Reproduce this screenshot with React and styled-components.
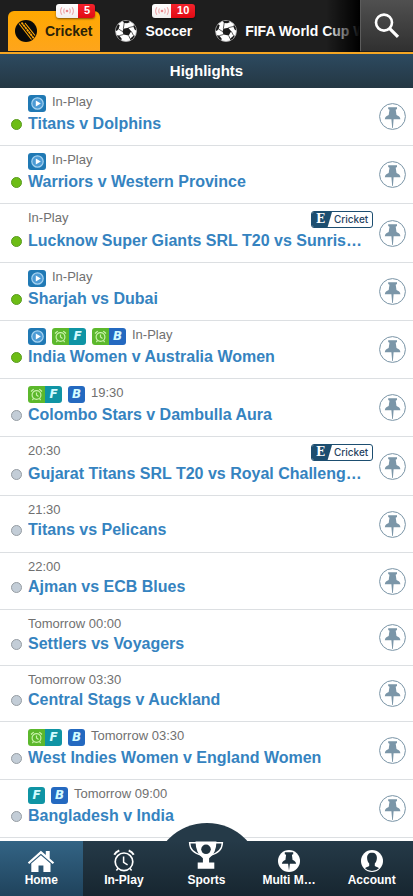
import React from "react";
import styled, { createGlobalStyle, css } from "styled-components";

const GlobalStyle = createGlobalStyle`
  *, *::before, *::after { box-sizing: border-box; }
  body {
    margin: 0;
    background: #fff;
    font-family: "Liberation Sans", Arial, sans-serif;
  }
  button { font: inherit; border: 0; padding: 0; background: none; cursor: pointer; }
  a { text-decoration: none; }
  svg { display: block; }
`;

const Page = styled.div`
  display: flex;
  flex-direction: column;
  min-height: 100vh;
`;

/* ---------- top bar ---------- */

const TopBar = styled.header`
  display: flex;
  height: 54px;
  background: #1e1e1e;
  border-bottom: 2px solid #f5a623;
`;

const SportTabs = styled.nav`
  position: relative;
  flex: 1;
  min-width: 0;
  display: flex;
  align-items: flex-end;
  gap: 8px;
  padding: 0 0 1px 8px;
  overflow: hidden;

  &::after {
    content: "";
    position: absolute;
    inset: 0 0 0 auto;
    width: 34px;
    background: linear-gradient(to right, rgba(0, 0, 0, 0), #000);
  }
`;

const SportTab = styled.a`
  position: relative;
  flex: none;
  display: flex;
  align-items: center;
  gap: 8px;
  height: 40px;
  padding: 0 8px 0 7px;
  border-radius: 6px 6px 0 0;
  color: #fff;
  font-size: 14px;
  font-weight: 700;
  line-height: 18px;
  white-space: nowrap;
  ${(p) =>
    p.$active &&
    css`
      color: #2a2208;
      background: linear-gradient(#ffa800, #fea51c);
    `}
`;

const LiveBadge = styled.span`
  position: absolute;
  top: -7px;
  right: 5px;
  display: flex;
  height: 14px;
  border-radius: 3px;
  overflow: hidden;
  font-size: 11px;
  line-height: 13px;
  color: #fff;
  box-shadow: 0 1px 2px rgba(0, 0, 0, 0.5);
`;

const LiveSignal = styled.span`
  display: grid;
  place-items: center;
  width: ${(p) => (p.$narrow ? 19 : 22)}px;
  background: linear-gradient(#fff, #f1eeee);
`;

const LiveCount = styled.span`
  width: ${(p) => (p.$wide ? 24 : 17)}px;
  text-align: center;
  background: linear-gradient(#f3232c, #e20a14);
`;

const SearchButton = styled.button`
  flex: none;
  width: 53px;
  height: 51px;
  display: grid;
  place-items: center;
  border-left: 1px solid #5c5c5c;
  background: linear-gradient(#505050, #303030);
`;

const SectionTitle = styled.h1`
  margin: 0;
  height: 34px;
  color: #fff;
  background: linear-gradient(#2d4a60, #243743);
  font-size: 15px;
  font-weight: 700;
  line-height: 34px;
  text-align: center;
`;

/* ---------- event list ---------- */

const EventList = styled.ul`
  margin: 0;
  padding: 0;
  list-style: none;
`;

const EventRow = styled.li`
  display: flex;
  align-items: center;
  gap: 6px;
  padding: 0 7px 0 11px;
  border-bottom: 1px solid #dcdfe2;
`;

const EventMain = styled.div`
  flex: 1;
  min-width: 0;
  display: grid;
  grid-template-columns: 11px minmax(0, 1fr);
  column-gap: 6px;
  align-items: center;
  padding: 7px 0 ${(p) => (p.$kind === "plain" ? 12 : 11)}px;
`;

const metaHeights = { plain: 17, day: 17, icons: 19, esport: 20 };

const EventMeta = styled.div`
  grid-column: 2;
  display: flex;
  align-items: flex-start;
  gap: 6px;
  height: ${(p) => metaHeights[p.$kind]}px;
`;

const EventTime = styled.span`
  color: #707070;
  font-size: 13px;
  line-height: 14px;
`;

const StatusDot = styled.span`
  width: 11px;
  height: 11px;
  border-radius: 50%;
  background: ${(p) => (p.$live ? "#6dbd15" : "#c3cdd7")};
  border: 1px solid ${(p) => (p.$live ? "#5a9a20" : "#969da3")};
`;

const EventLink = styled.a`
  color: #3583c0;
  font-size: 16px;
  font-weight: 700;
  line-height: 20px;
  white-space: nowrap;
  overflow: hidden;
  text-overflow: ellipsis;
`;

const MarketBadge = styled.span`
  display: flex;
  height: 17px;
  border-radius: 3px;
  overflow: hidden;
`;

const partColours = { play: "#2079b4", clock: "#5cb82c", F: "#0f94a4", B: "#2469c0" };

const BadgePart = styled.span`
  display: grid;
  place-items: center;
  width: ${(p) => (p.$type === "play" ? 18 : 17)}px;
  height: 17px;
  background: ${(p) => partColours[p.$type]};
`;

const EsportBadge = styled.span`
  flex: none;
  display: flex;
  align-items: center;
  width: 62px;
  height: 17px;
  margin-left: auto;
  border: 1px solid #1d4e70;
  border-radius: 3px;
  overflow: hidden;
  color: #27435f;
  background: #fff;
  font-family: Inter, sans-serif;
  font-size: 10px;
  font-weight: 500;
  line-height: 15px;
`;

const EsportMark = styled.span`
  width: 20px;
  height: 15px;
  margin-right: 2px;
  padding-left: 4px;
  color: #fff;
  background: #1d4e70;
  clip-path: polygon(0 0, 100% 0, 78% 100%, 0 100%);
  font-family: "DejaVu Serif", serif;
  font-size: 12px;
  font-weight: 700;
  line-height: 15px;
`;

const PinButton = styled.button`
  flex: none;
  width: 27px;
  height: 27px;
`;

/* ---------- bottom navigation ---------- */

const BottomNav = styled.nav`
  position: relative;
  flex: none;
  display: grid;
  grid-template-columns: repeat(5, minmax(0, 1fr));
  height: 55px;
  margin-top: auto;
  background: linear-gradient(#253a48, #172630);
`;

const NavHump = styled.span`
  position: absolute;
  left: 50%;
  bottom: 100%;
  width: 82px;
  height: 18px;
  margin-left: -41px;
  overflow: hidden;

  &::before {
    content: "";
    position: absolute;
    top: 0;
    left: -13px;
    width: 108px;
    height: 108px;
    border-radius: 50%;
    background: #253a48;
  }
`;

const NavItem = styled.a`
  position: relative;
  display: flex;
  flex-direction: column;
  align-items: center;
  justify-content: flex-end;
  gap: 1px;
  padding-bottom: 9px;
  color: #fff;
  font-size: 12px;
  font-weight: 700;
  line-height: 15px;
  ${(p) =>
    p.$active &&
    css`
      background: linear-gradient(#336485, #1f425b);
    `}
`;

const NavLabel = styled.span`
  max-width: 100%;
  white-space: nowrap;
`;

/* ---------- drawings ---------- */

const CricketIcon = () => (
  <svg width="22" height="22" viewBox="0 0 22 22" aria-hidden="true">
    <circle cx="11" cy="11" r="11" fill="#0a0a0a" />
    <g stroke="#ffa707" fill="none">
      <path d="M4 3.5 16.500 19.500" strokeWidth="1.2" />
      <path d="M6.500 2.500 19 18.500" strokeWidth="1.800" strokeDasharray="2.500 .4" />
      <path d="M10 3 20 15.500" strokeWidth="1.200" />
    </g>
  </svg>
);

const SoccerIcon = () => (
  <svg width="22" height="22" viewBox="0 0 22 22" aria-hidden="true">
    <circle cx="11" cy="11" r="10.5" fill="#fff" stroke="#b5b5b5" strokeWidth=".8" />
    <g fill="#1b1b1b">
      <path d="m8.300 8.800 5-1.100 2.900 3.500-2.500 4.300-5.200-1-1-3z" />
      <path d="M8 .9 13.500.8l1.300 1.400-2.600 1-3.300-.3z" />
      <path d="m1.800 6 1.900-1.800.9 1.300-1 3.600-1.900 1.800-1-.6z" />
      <path d="m19 4.800 1.600 2.500.6 3.200-1.600-1.100-1.300-2.900z" />
      <path d="m1.800 15.200 2.300.2 2.500 3-.1 1.800-2.500-1.300z" />
      <path d="m18.500 15.700 1.500-.2-2 3.200-3.200 1.700.5-1.900z" />
    </g>
    <path
      d="m8.300 8.800.9-5.800M13.300 7.700l5-1.200M16.200 11.200l2.400 4.500M13.700 15.500l1.300 3.200M8.500 14.500l-4.200 1.100M7.500 11.500 3.600 9"
      stroke="#1b1b1b"
      strokeWidth=".7"
    />
  </svg>
);

const SignalIcon = () => (
  <svg width="14" height="8" viewBox="0 0 14 8" fill="none" stroke="#eda6a9" aria-hidden="true">
    <circle cx="7" cy="4" r="1.3" fill="#e98489" stroke="none" />
    <path d="M4.500 1.500q-1.600 2.500 0 5M9.500 1.500q1.600 2.500 0 5M1.900.3q-2.600 3.700 0 7.400M12.100.3q2.600 3.700 0 7.400" strokeWidth="1.100" />
  </svg>
);

const SearchIcon = () => (
  <svg width="26" height="26" viewBox="0 0 26 26" fill="none" stroke="#fff" aria-hidden="true">
    <circle cx="10" cy="9.600" r="8" strokeWidth="2.600" />
    <path d="m15.500 15.300 8.500 8.600" strokeWidth="3.200" />
  </svg>
);

const PlayIcon = () => (
  <svg width="13" height="13" viewBox="0 0 13 13" aria-hidden="true">
    <circle cx="6.500" cy="6.500" r="5.700" fill="#4c9bd5" stroke="#a5d2f0" strokeWidth="1.200" />
    <path d="M4.800 3.500v6L9.800 6.500z" fill="#fff" />
  </svg>
);

const ClockIcon = () => (
  <svg width="13" height="13" viewBox="0 0 13 13" fill="none" stroke="#c9f2ab" aria-hidden="true">
    <circle cx="6.500" cy="7" r="4.400" strokeWidth="1.200" />
    <path d="M6.500 4.500V7l2 1.400M1 3.500 3.700 1.100M12 3.500 9.300 1.100M3.500 10.500l-1.100 1.700M9.500 10.500l1.100 1.700" strokeWidth="1.200" />
  </svg>
);

const Letter = styled.span`
  color: #d2fbff;
  font-family: "DejaVu Sans", sans-serif;
  font-size: 12px;
  font-style: italic;
  font-weight: 700;
  line-height: 17px;
`;

const PinIcon = () => (
  <svg width="27" height="27" viewBox="0 0 27 27" aria-hidden="true">
    <circle cx="13.500" cy="13.500" r="12.900" fill="#fff" stroke="#7893a5" strokeWidth="1" />
    <path
      d="M9.200 4.200h8.800v1.900l-1.300.7.800 5.200c2 .7 3.800 2.100 3.900 4.300h-6.800l-.7 8.700h-.7l-.8-8.700H5.800c.1-2.200 1.900-3.600 3.900-4.300l.8-5.200-1.300-.7z"
      fill="#7b96a8"
    />
  </svg>
);

const HomeIcon = () => (
  <svg width="28" height="22" viewBox="0 0 28 22" fill="#fff" aria-hidden="true">
    <path d="M13.900.7 18.800 5V.9h3.900v7.500l4.500 4-1.500 1.700L13.900 3.800 2.200 14.100.8 12.400z" />
    <path d="M13.900 5.200 23.500 13.600V22h-7.100v-6.400h-4.900V22H4.300v-8.400z" />
  </svg>
);

const AlarmIcon = () => (
  <svg width="22" height="23" viewBox="0 0 22 23" fill="none" stroke="#fff" aria-hidden="true">
    <circle cx="11" cy="12.800" r="8.800" strokeWidth="1.700" />
    <path d="M10.600 7.500v5.800l4 2.500" strokeWidth="1.500" />
    <path d="M1.300 5.800q1.500-3 5-4.300M20.700 5.800q-1.500-3-5-4.300" strokeWidth="2" />
    <path d="m5 19.500-1.600 2M17 19.500l1.600 2" strokeWidth="1.500" />
  </svg>
);

const TrophyIcon = () => (
  <svg width="36" height="31" viewBox="0 0 36 31" aria-hidden="true">
    <path
      d="M8.500 1.800H1.600q.4 10 12.200 12.400M27.500 1.800h6.900q-.4 10-12.200 12.400"
      fill="none"
      stroke="#fff"
      strokeWidth="1.400"
    />
    <path d="M7.500.6h21q-.3 12-7.400 16.700v4.300h5.200v6.200H9.700v-6.200h5.200v-4.300Q7.800 12.600 7.500.6z" fill="#fff" />
    <circle cx="18" cy="8.300" r="4.800" fill="#20333f" />
  </svg>
);

const MultiIcon = () => (
  <svg width="22" height="22" viewBox="0 0 22 22" aria-hidden="true">
    <circle cx="11" cy="11" r="11" fill="#fff" />
    <path
      d="M6.800 2.300h8.400v1.900l-1.300.5.700 5.200c1.900.7 3.400 1.900 3.500 3.900h-6.200L11 20.500l-.9-6.700H3.900c.1-2 1.600-3.200 3.500-3.900l.7-5.200-1.300-.5z"
      fill="#1e313d"
    />
  </svg>
);

const AccountIcon = () => (
  <svg width="22" height="22" viewBox="0 0 22 22" aria-hidden="true">
    <circle cx="11" cy="11" r="11" fill="#fff" />
    <path
      d="M11 2.700c3.500 0 5 2.200 4.900 5.300-.1 2.600-.9 4.300-2.100 5.500v2.400c1 .7 3.200 1 4.200 2.300a10 10 0 0 1-14 0c1-1.300 3.200-1.600 4.200-2.300v-2.400C7 12.300 6.200 10.600 6.100 8 6 4.900 7.500 2.700 11 2.700z"
      fill="#1e313d"
    />
  </svg>
);

/* ---------- data ---------- */

const sports = [
  { name: "Cricket", icon: CricketIcon, live: 5, active: true },
  { name: "Soccer", icon: SoccerIcon, live: 10 },
  { name: "FIFA World Cup Winner", icon: SoccerIcon },
];

const events = [
  { kind: "icons", time: "In-Play", name: "Titans v Dolphins", live: true, badges: [["play"]] },
  { kind: "icons", time: "In-Play", name: "Warriors v Western Province", live: true, badges: [["play"]] },
  { kind: "esport", time: "In-Play", name: "Lucknow Super Giants SRL T20 vs Sunris…", live: true },
  { kind: "icons", time: "In-Play", name: "Sharjah vs Dubai", live: true, badges: [["play"]] },
  { kind: "icons", time: "In-Play", name: "India Women v Australia Women", live: true, badges: [["play"], ["clock", "F"], ["clock", "B"]] },
  { kind: "icons", time: "19:30", name: "Colombo Stars v Dambulla Aura", badges: [["clock", "F"], ["B"]] },
  { kind: "esport", time: "20:30", name: "Gujarat Titans SRL T20 vs Royal Challeng…" },
  { kind: "plain", time: "21:30", name: "Titans vs Pelicans" },
  { kind: "plain", time: "22:00", name: "Ajman vs ECB Blues" },
  { kind: "day", time: "Tomorrow 00:00", name: "Settlers vs Voyagers" },
  { kind: "day", time: "Tomorrow 03:30", name: "Central Stags v Auckland" },
  { kind: "icons", time: "Tomorrow 03:30", name: "West Indies Women v England Women", badges: [["clock", "F"], ["B"]] },
  { kind: "icons", time: "Tomorrow 09:00", name: "Bangladesh v India", badges: [["F"], ["B"]] },
];

const navItems = [
  { label: "Home", icon: HomeIcon, active: true },
  { label: "In-Play", icon: AlarmIcon },
  { label: "Sports", icon: TrophyIcon },
  { label: "Multi M…", icon: MultiIcon },
  { label: "Account", icon: AccountIcon },
];

function BadgeContent({ type }) {
  if (type === "play") return <PlayIcon />;
  if (type === "clock") return <ClockIcon />;
  return <Letter>{type}</Letter>;
}

function Event({ event }) {
  const { kind, time, name, live, badges = [] } = event;
  return (
    <EventRow>
      <EventMain $kind={kind}>
        <EventMeta $kind={kind}>
          {badges.map((parts) => (
            <MarketBadge key={parts.join("")}>
              {parts.map((type) => (
                <BadgePart key={type} $type={type}>
                  <BadgeContent type={type} />
                </BadgePart>
              ))}
            </MarketBadge>
          ))}
          <EventTime>{time}</EventTime>
          {kind === "esport" && (
            <EsportBadge>
              <EsportMark>E</EsportMark>
              Cricket
            </EsportBadge>
          )}
        </EventMeta>
        <StatusDot $live={live} />
        <EventLink href="#event">{name}</EventLink>
      </EventMain>
      <PinButton type="button" aria-label={`Pin ${name}`}>
        <PinIcon />
      </PinButton>
    </EventRow>
  );
}

export default function App() {
  return (
    <Page>
      <GlobalStyle />
      <TopBar>
        <SportTabs aria-label="Sports">
          {sports.map(({ name, icon: Icon, live, active }) => (
            <SportTab key={name} href="#sport" $active={active}>
              <Icon />
              {name}
              {live && (
                <LiveBadge>
                  <LiveSignal $narrow={live > 9}>
                    <SignalIcon />
                  </LiveSignal>
                  <LiveCount $wide={live > 9}>{live}</LiveCount>
                </LiveBadge>
              )}
            </SportTab>
          ))}
        </SportTabs>
        <SearchButton type="button" aria-label="Search">
          <SearchIcon />
        </SearchButton>
      </TopBar>
      <SectionTitle>Highlights</SectionTitle>
      <EventList>
        {events.map((event) => (
          <Event key={event.name} event={event} />
        ))}
      </EventList>
      <BottomNav aria-label="Main">
        <NavHump />
        {navItems.map(({ label, icon: Icon, active }) => (
          <NavItem key={label} href="#nav" $active={active}>
            <Icon />
            <NavLabel>{label}</NavLabel>
          </NavItem>
        ))}
      </BottomNav>
    </Page>
  );
}
